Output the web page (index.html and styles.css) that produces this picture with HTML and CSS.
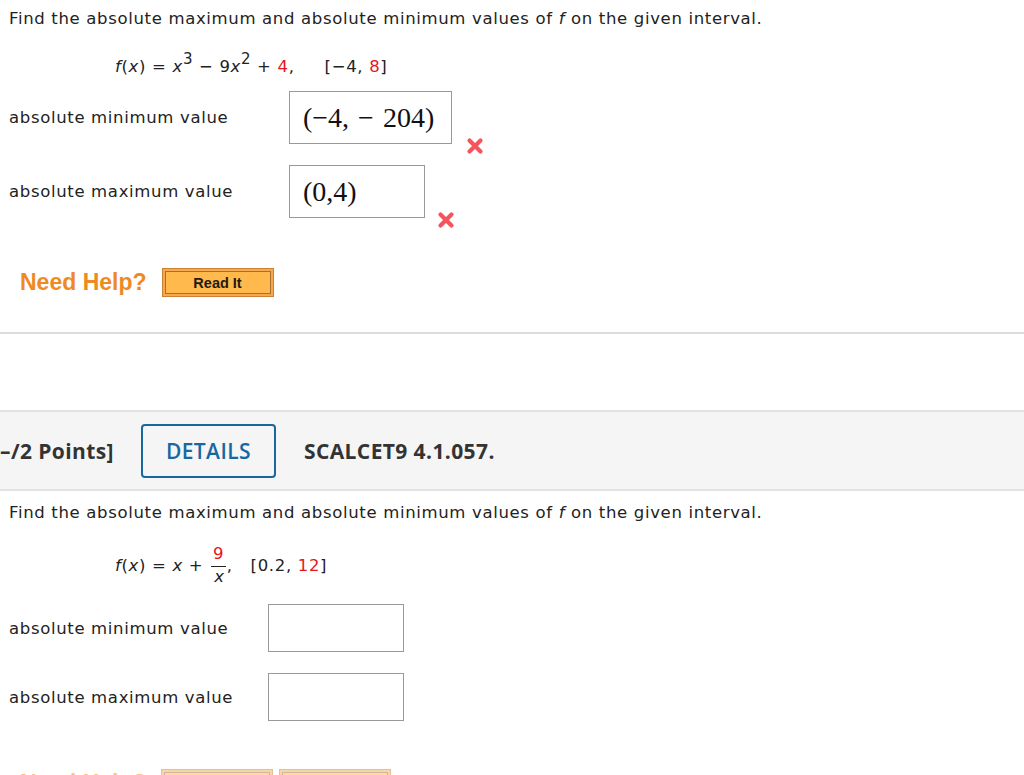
FILE: index.html
```html
<!DOCTYPE html>
<html lang="en">

<head>
    <meta charset="UTF-8">
    <title>SCALCET9 4.1</title>
    <link rel="stylesheet" href="styles.css">
</head>

<body>
    <div class="pregunta">
        <p class="enunciado">Find the absolute maximum and absolute minimum values of <i>f</i> on the given interval.</p>
        <p class="formula"><i>f</i>(<i>x</i>) = <i>x</i><sup>3</sup> &minus; 9<i>x</i><sup>2</sup> + <span class="rojo">4</span>,<span class="sep"></span>[&minus;4, <span class="rojo">8</span>]</p>

        <div class="fila fila-1">
            <span class="etiqueta">absolute minimum value</span>
            <div class="caja caja-ancha"><span class="mate">(&minus;4, &minus; 204)</span></div>
            <svg class="cruz" width="18" height="18" viewBox="0 0 18 18"><path d="M3.5 3.5 L14.5 14.5 M14.5 3.5 L3.5 14.5" stroke="#f4555c" stroke-width="4.2" stroke-linecap="round"/></svg>
        </div>

        <div class="fila fila-2">
            <span class="etiqueta">absolute maximum value</span>
            <div class="caja"><span class="mate">(0,4)</span></div>
            <svg class="cruz" width="18" height="18" viewBox="0 0 18 18"><path d="M3.5 3.5 L14.5 14.5 M14.5 3.5 L3.5 14.5" stroke="#f4555c" stroke-width="4.2" stroke-linecap="round"/></svg>
        </div>

        <div class="ayuda">
            <span class="necesita">Need Help?</span>
            <span class="boton-ayuda"><span>Read It</span></span>
        </div>
    </div>

    <hr class="divisor">

    <div class="cabecera">
        <span class="puntos">&ndash;/2 Points]</span>
        <span class="detalles">DETAILS</span>
        <span class="codigo">SCALCET9 4.1.057.</span>
    </div>

    <div class="pregunta pregunta-2">
        <p class="enunciado">Find the absolute maximum and absolute minimum values of <i>f</i> on the given interval.</p>
        <div class="formula-2">
            <span><i>f</i>(<i>x</i>) = <i>x</i> +</span>
            <span class="fraccion"><span class="num rojo">9</span><span class="den"><i>x</i></span></span>
            <span>,</span>
            <span class="intervalo">[0.2, <span class="rojo">12</span>]</span>
        </div>

        <div class="fila fila-3">
            <span class="etiqueta">absolute minimum value</span>
            <div class="caja"></div>
        </div>

        <div class="fila fila-4">
            <span class="etiqueta">absolute maximum value</span>
            <div class="caja"></div>
        </div>

        <div class="ayuda apagada">
            <span class="necesita">Need Help?</span>
            <span class="boton-ayuda"><span>Read It</span></span>
            <span class="boton-ayuda"><span>Watch It</span></span>
        </div>
    </div>
</body>

</html>
```

FILE: styles.css
```css
body {
    margin: 0;
    font-family: 'DejaVu Sans', Verdana, sans-serif;
    font-size: 16.5px;
    letter-spacing: 0.66px;
    color: #222;
    background-color: #ffffff;
    overflow: hidden;
}

.pregunta {
    padding-left: 9px;
}

.enunciado {
    margin: 0;
    padding-top: 9px;
    line-height: 20px;
}

.formula {
    margin: 28px 0 0 106px;
    line-height: 20px;
}

.formula sup {
    font-size: 15px;
    vertical-align: 8px;
    line-height: 0;
}

.rojo {
    color: #e8151b;
}

.sep {
    display: inline-block;
    width: 30px;
}

.fila {
    display: flex;
    align-items: center;
}

.etiqueta {
    width: 280px;
    flex-shrink: 0;
}

.caja {
    box-sizing: border-box;
    width: 136px;
    height: 53px;
    border: 1px solid #999;
    background-color: #fff;
    display: flex;
    align-items: center;
    padding-left: 13px;
}

.caja-ancha {
    width: 163px;
}

.mate {
    font-family: 'Liberation Serif', 'Times New Roman', serif;
    font-size: 28px;
    letter-spacing: 0;
    color: #111;
    word-spacing: 2px;
}

.cruz {
    align-self: flex-end;
    margin: 0 0 -11px 14px;
}

.fila-1 {
    margin-top: 14px;
}

.fila-2 {
    margin-top: 21px;
}

.fila-2 .cruz {
    margin-left: 12px;
}

.ayuda {
    display: flex;
    align-items: center;
    margin: 50px 0 0 11px;
    gap: 15px;
    letter-spacing: 0;
}

.necesita {
    font-family: 'Liberation Sans', Arial, sans-serif;
    font-weight: bold;
    font-size: 23px;
    color: #ee8a24;
}

.boton-ayuda {
    box-sizing: border-box;
    width: 112px;
    height: 29px;
    border: 1px solid #c98235;
    background-color: #f7a84f;
    padding: 2px;
    display: flex;
}

.boton-ayuda span {
    flex: 1;
    border: 1px solid #a8702f;
    background-color: #ffb94c;
    font-family: 'Liberation Sans', Arial, sans-serif;
    font-weight: bold;
    font-size: 14.5px;
    color: #1e1a14;
    display: flex;
    align-items: center;
    justify-content: center;
}

.divisor {
    margin: 35px 0 0;
    border: none;
    border-top: 2px solid #dcdcdc;
    height: 0;
}

.cabecera {
    margin-top: 76px;
    height: 77px;
    box-sizing: content-box;
    border-top: 2px solid #e2e2e2;
    border-bottom: 2px solid #e2e2e2;
    background-color: #f5f5f5;
    display: flex;
    align-items: center;
    font-family: 'Open Sans', sans-serif;
    font-weight: bold;
    font-size: 21px;
    letter-spacing: 0.4px;
    color: #333;
}

.detalles {
    box-sizing: border-box;
    width: 135px;
    height: 54px;
    margin-left: 27px;
    border: 2px solid #1868a0;
    border-radius: 4px;
    display: flex;
    align-items: center;
    justify-content: center;
    color: #1868a0;
    font-weight: 600;
}

.codigo {
    margin-left: 28px;
}

.pregunta-2 .enunciado {
    padding-top: 12px;
}

.formula-2 {
    display: flex;
    align-items: center;
    margin: 18px 0 0 106px;
    height: 48px;
    white-space: pre;
}

.fraccion {
    display: flex;
    flex-direction: column;
    align-items: center;
    line-height: 20px;
    margin: 0 1px 0 8px;
}

.num {
    padding-bottom: 2px;
}

.den {
    border-top: 1px solid #222;
    padding: 0 1px 0 3px;
    line-height: 20px;
}

.intervalo {
    margin-left: 18px;
}

.pregunta-2 .etiqueta {
    width: 259px;
}

.pregunta-2 .caja {
    height: 48px;
}

.fila-3 {
    margin-top: 15px;
}

.fila-4 {
    margin-top: 21px;
}

.apagada {
    margin-top: 48px;
    opacity: 0.5;
    gap: 14px;
}

.apagada .boton-ayuda + .boton-ayuda {
    margin-left: -8px;
}
```
